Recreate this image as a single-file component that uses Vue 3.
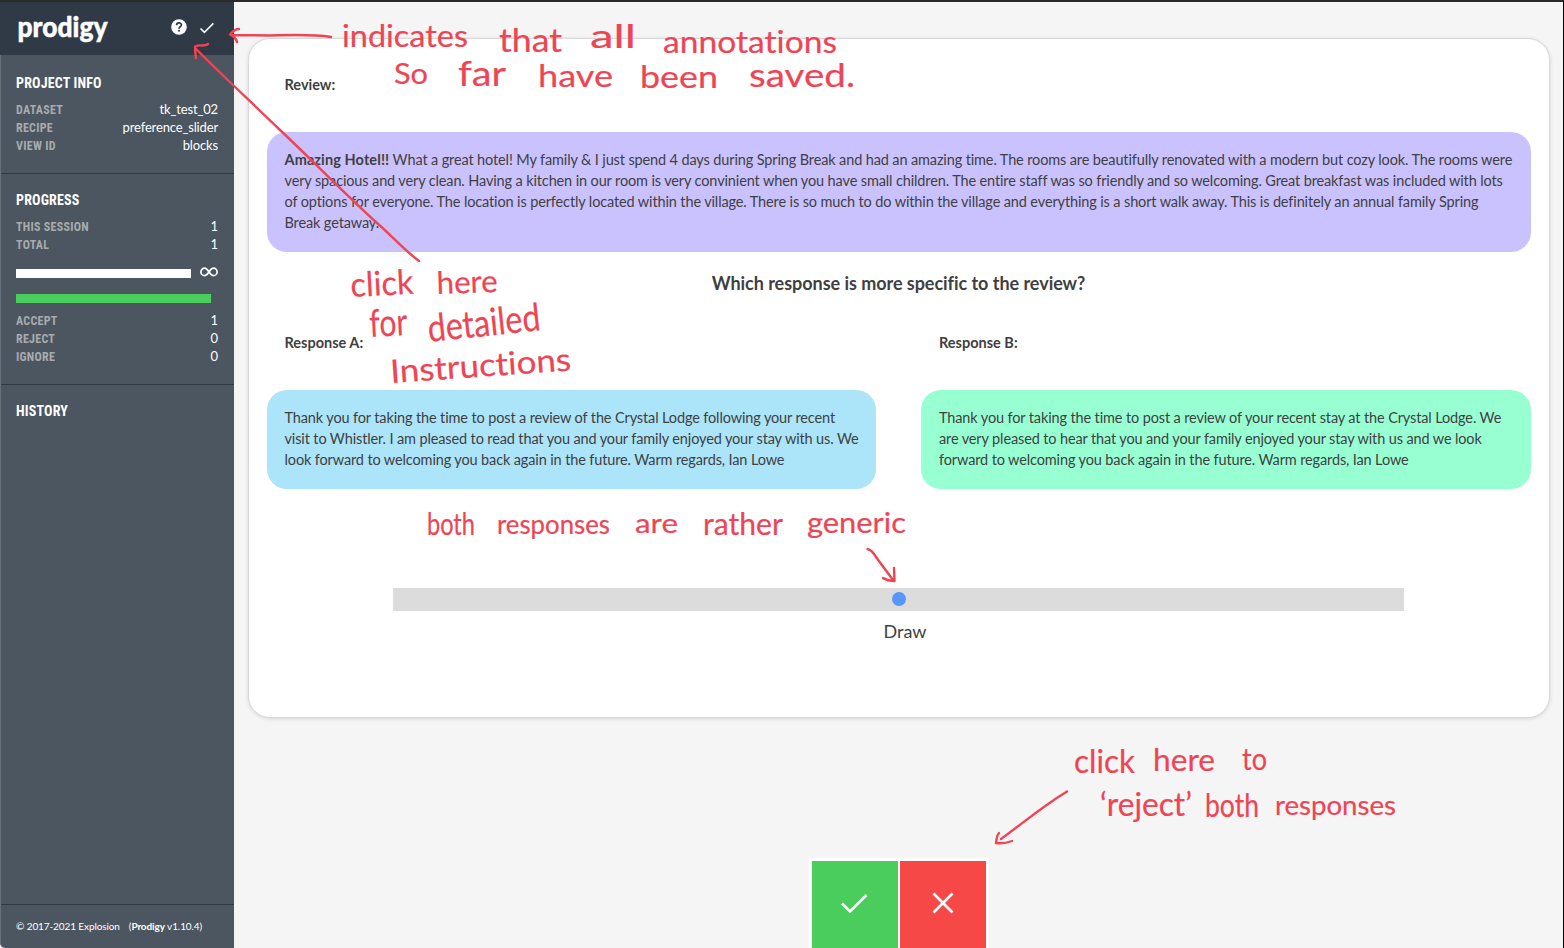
<script setup>
const info = [['Dataset', 'tk_test_02'], ['Recipe', 'preference_slider'], ['View ID', 'blocks']]
const totals = [['This session', '1'], ['Total', '1']]
const decisions = [['Accept', '1'], ['Reject', '0'], ['Ignore', '0']]
const notes = [
  ['indicates', 342, 47, 126, 30, 0], ['that', 499, 52, 63, 33, 0], ['all', 590, 48, 46, 33, 0],
  ['annotations', 663, 53, 174, 30, 0], ['So', 394, 84, 34, 28, 0], ['far', 458, 86, 48, 35, 0],
  ['have', 538, 87, 75, 31, 0], ['been', 640, 88, 78, 30, 0], ['saved.', 749, 87, 106, 32, 0],
  ['click', 351, 297, 63, 34, -3], ['here', 437, 294, 61, 31, -2], ['for', 370, 337, 38, 38, -3],
  ['detailed', 429, 342, 113, 38, -6], ['Instructions', 391, 383, 181, 32, -4],
  ['both', 427, 535, 48, 30, 0], ['responses', 497, 534, 113, 26, 0], ['are', 635, 533, 43, 26, 0],
  ['rather', 703, 535, 80, 30, 0], ['generic', 807, 533, 99, 29, 0],
  ['click', 1074, 773, 61, 33, 0], ['here', 1153, 771, 62, 30, 0], ['to', 1242, 770, 25, 31, 0],
  ['‘reject’', 1100, 816, 92, 32, 0], ['both', 1205, 817, 54, 33, 0], ['responses', 1275, 815, 121, 27, 0],
]
</script>

<template>
  <div class="app">
    <aside class="sidebar">
      <header class="brand">
        <svg class="logo" width="94" height="48" viewBox="0 0 94 48"><text x="0.500" y="32" textLength="90" lengthAdjust="spacingAndGlyphs">prodigy</text></svg>
        <svg class="help" width="16" height="16" viewBox="0 0 16 16"><circle cx="8" cy="8" r="7.8" fill="#fff" /><path d="M5.6 6.3C5.6 3.1 10.4 3.2 10.4 6.1C10.4 7.9 8 7.7 8 9.7" fill="none" stroke="#303a47" stroke-width="1.7" /><rect x="7.1" y="10.8" width="1.8" height="1.8" fill="#303a47" /></svg>
        <svg class="saved" width="16" height="14" viewBox="0 0 16 14"><path d="M1.5 7.5L5.4 11.4L14.4 2.4" fill="none" stroke="#fff" stroke-width="1.5" /></svg>
      </header>
      <section class="panel project">
        <h2>Project info</h2>
        <p v-for="r in info" :key="r[0]" class="row"><b>{{ r[0] }}</b><span>{{ r[1] }}</span></p>
      </section>
      <section class="panel progress">
        <h2>Progress</h2>
        <p v-for="r in totals" :key="r[0]" class="row"><b>{{ r[0] }}</b><span>{{ r[1] }}</span></p>
        <div class="meter">
          <i></i>
          <svg width="18" height="10" viewBox="0 0 18 10"><path d="M9 5C7.2 2.4 6.2 1.2 4.6 1.2A3.7 3.7 0 0 0 4.6 8.6C6.2 8.6 7.2 7.5 9 5C10.8 2.4 11.8 1.2 13.4 1.2A3.7 3.7 0 0 1 13.4 8.6C11.8 8.6 10.8 7.5 9 5Z" fill="none" stroke="#fff" stroke-width="1.7" /></svg>
        </div>
        <div class="accepted"></div>
        <p v-for="r in decisions" :key="r[0]" class="row"><b>{{ r[0] }}</b><span>{{ r[1] }}</span></p>
      </section>
      <section class="panel history"><h2>History</h2></section>
      <footer>© 2017-2021 Explosion <span>(<strong>Prodigy</strong> v1.10.4)</span></footer>
    </aside>

    <main>
      <article class="card">
        <h4 class="review-label">Review:</h4>
        <div class="bubble review"><strong>Amazing Hotel!!</strong> What a great hotel! My family &amp; I just spend 4 days during Spring Break and had an amazing time. The rooms are beautifully renovated with a modern but cozy look. The rooms were<br>very spacious and very clean. Having a kitchen in our room is very convinient when you have small children. The entire staff was so friendly and so welcoming. Great breakfast was included with lots<br>of options for everyone. The location is perfectly located within the village. There is so much to do within the village and everything is a short walk away. This is definitely an annual family Spring<br>Break getaway.</div>
        <h3>Which response is more specific to the review?</h3>
        <div class="responses">
          <div>
            <h4>Response A:</h4>
            <div class="bubble a">Thank you for taking the time to post a review of the Crystal Lodge following your recent<br>visit to Whistler. I am pleased to read that you and your family enjoyed your stay with us. We<br>look forward to welcoming you back again in the future. Warm regards, Ian Lowe</div>
          </div>
          <div>
            <h4>Response B:</h4>
            <div class="bubble b">Thank you for taking the time to post a review of your recent stay at the Crystal Lodge. We<br>are very pleased to hear that you and your family enjoyed your stay with us and we look<br>forward to welcoming you back again in the future. Warm regards, Ian Lowe</div>
          </div>
        </div>
        <div class="slider"><i></i></div>
        <div class="verdict">Draw</div>
      </article>
      <div class="actions">
        <button class="accept"><svg width="30" height="24" viewBox="0 0 30 24"><path d="M3 12.5L11 20.5L27.5 4" /></svg></button>
        <button class="reject"><svg width="24" height="24" viewBox="0 0 24 24"><path d="M2.500 2.500L21.500 21.500M21.500 2.500L2.500 21.500" /></svg></button>
      </div>
    </main>

    <svg class="notes" width="1564" height="948" viewBox="0 0 1564 948">
      <text v-for="(n, i) in notes" :key="i" :x="n[1]" :y="n[2]" :font-size="n[4]" :textLength="n[3]" lengthAdjust="spacingAndGlyphs" :transform="`rotate(${n[5]} ${n[1]} ${n[2]})`">{{ n[0] }}</text>
      <g>
        <path d="M331 37C311 34 292 35 270 35.5L231 35M239 29C235 29 233 31 230 34.5Q235 36 237 42" />
        <path d="M419 261C404 250 391 235 377 223C345 194 312 160 280 130C251 102 221 74 196 49M208 44C204 47 200 44 195 46.500Q195 52 196 58" />
        <path d="M867.5 549Q872 550 876 557L893 580M894 568L894.500 581Q888 581 883 578" />
        <path d="M1067 791.500C1040 808 1022 824 1001 839M999 833C996 836 997 839 996 843Q1004 844 1012 841" />
      </g>
    </svg>
  </div>
</template>

<style>
body { margin: 0; overflow: hidden; }
</style>

<style scoped>
* { box-sizing: border-box; }
.app { position: relative; width: 1564px; height: 948px; display: flex; background: #f5f5f5; border-top: 2px solid #2a292b; border-right: 1px solid #000; font-family: Lato, "Open Sans", sans-serif; font-variant-ligatures: none; color: #3f3f42; overflow: hidden; }
h2, h3, h4, p { margin: 0; }
.sidebar { width: 234px; display: flex; flex-direction: column; background: #4b5661; color: #fff; border-left: 1px solid #65717b; border-bottom-left-radius: 5px; flex: none; }
.brand { height: 53px; margin-left: -1px; padding: 0 19px 0 17px; background: #303a47; display: flex; align-items: center; }
.logo { overflow: visible; }
.logo text { font-size: 29px; font-weight: 900; fill: #fff; stroke: #fff; stroke-width: .5; }
.help { margin-left: 60px; margin-top: -3px; }
.saved { margin-left: 12px; margin-top: -1px; }
.panel { padding: 18px 16px 0 15px; }
.project { height: 118px; }
.progress { height: 211px; border-top: 1px solid #303a47; padding-top: 16px; }
.history { border-top: 1px solid #303a47; padding-top: 16px; flex: 1; }
h2 { font: 700 14px/20px "Roboto Condensed", Roboto, sans-serif; font-stretch: condensed; letter-spacing: .17px; text-transform: uppercase; margin-bottom: 8px; }
.row { display: flex; justify-content: space-between; height: 18px; font-size: 13px; line-height: 16px; letter-spacing: -.15px; }
.row b { font: 700 12px/18px "Roboto Condensed", Roboto, sans-serif; font-stretch: condensed; letter-spacing: .28px; text-transform: uppercase; color: #a9abae; }
.meter { display: flex; align-items: center; justify-content: space-between; margin-top: 13px; height: 10px; }
.meter i { width: 175px; height: 9px; margin-top: 3px; background: #fff; }
.accepted { width: 195px; height: 9px; background: #4bcd5e; margin: 17px 0 9px; }
footer { height: 44px; border-top: 1px solid #303a47; padding-left: 15px; font-size: 10px; line-height: 42px; letter-spacing: -.1px; white-space: nowrap; }
footer span { margin-left: 6.5px; }
main { flex: 1; display: flex; flex-direction: column; align-items: center; padding-top: 36px; }
.card { width: 1302px; height: 680px; padding: 35px 18px 0; border: 1px solid #d8d8d8; border-radius: 22px; background: #fff; box-shadow: 0 1px 4px rgba(0, 0, 0, .12); }
h4 { padding-left: 18px; font-size: 14.5px; line-height: 21px; font-weight: 700; }
.review-label { margin-bottom: 37px; }
.bubble { padding: 17px 0 19px 18px; border-radius: 20px; font-size: 14.5px; line-height: 21px; letter-spacing: -.129px; white-space: nowrap; }
.bubble strong { letter-spacing: .1px; }
.review { background: #cac2fe; }
h3 { font-size: 18px; line-height: 24px; margin: 19px 0 37px; text-align: center; letter-spacing: -.04px; }
.responses { display: grid; grid-template-columns: 1fr 1fr; gap: 45px; }
.responses h4 { margin-bottom: 37px; }
.a { background: #ace4f9; }
.b { background: #97ffd2; }
.slider { width: 1011px; height: 23px; margin: 99px auto 0; padding: 0 0 1px; background: #dcdcdc; display: flex; justify-content: center; align-items: center; }
.slider i { width: 14px; height: 14px; border-radius: 50%; background: #5796fa; }
.verdict { margin: 8px 0 0 13px; text-align: center; font-size: 18px; line-height: 24px; }
.actions { display: flex; gap: 2px; padding: 3px 3px 0; margin-top: 140px; background: #fff; }
button { width: 86px; height: 87px; padding: 0 0 3px; border: 0; display: grid; place-items: center; }
button path { fill: none; stroke: #fff; stroke-width: 2.6; }
.accept { background: #4bcd5e; padding: 0 2px 4px 0; }
.reject { background: #f74848; }
.notes { position: absolute; left: 0; top: -2px; pointer-events: none; }
.notes text { font-family: Lato, sans-serif; font-weight: 400; fill: #ee4454; stroke: #ee4454; stroke-width: .2; }
.notes path { fill: none; stroke: #ee4454; stroke-width: 2.4; stroke-linecap: round; stroke-linejoin: round; }
</style>
